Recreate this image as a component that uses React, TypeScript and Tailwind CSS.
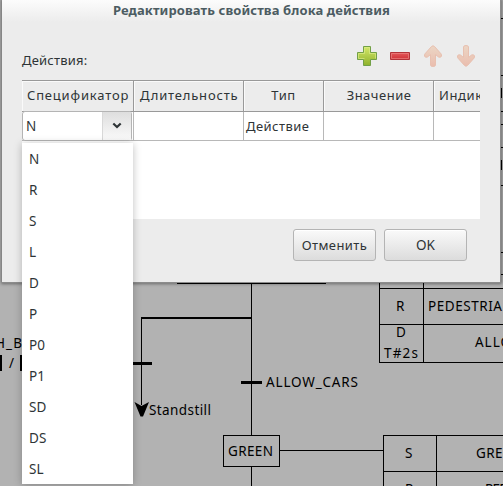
import React from "react";

const OPTIONS = ["N", "R", "S", "L", "D", "P", "P0", "P1", "SD", "DS", "SL"];

type LabelProps = { x: number; y: number; w: number; children: string };

function Label({ x, y, w, children }: LabelProps) {
  return (
    <text x={x} y={y} textLength={w} fontSize="13.5" fill="#000">
      {children}
    </text>
  );
}

function Diagram() {
  return (
    <svg className="absolute inset-0" width="503" height="486" viewBox="0 0 503 486">
      <g stroke="#000" strokeWidth="1" fill="none" shapeRendering="crispEdges">
        <path d="M177 283.500H326M251.500 283V435M251.500 466V486M141.500 317V405" />
        <path d="M141 318H252" strokeWidth="2" />
        <path d="M133 363.500H152M241 382.500H262" strokeWidth="3" />
        <path d="M223.500 435.500H279.500V466.500H223.500ZM280 450.500H383" />
        <path d="M379.500 280V362.500H503M423.500 280V362M379 288.500H503M379 324.500H503" />
        <path d="M503 435.500H383.500V486M436.500 435V486M383 471.500H503" />
        <path d="M500 18.500H503M500 75.500H503M500 111.500H503M500 124.500H503M500 147.500H503M500 185.500H503M500 252.500H503M500 274.500H503" />
        <path d="M501.500 88V98M501.500 160V170" />
      </g>
      <path d="M0 355H2V371H0ZM20 355H23V371H20Z" />
      <path d="M134.500 402L141.500 406L149 402L143 416.500H140.500Z" />
      <Label x={-5} y={348} w={27}>H_B</Label>
      <Label x={9} y={368} w={5}>/</Label>
      <Label x={149} y={415} w={62}>Standstill</Label>
      <Label x={266} y={387} w={92}>ALLOW_CARS</Label>
      <Label x={228} y={456} w={45}>GREEN</Label>
      <Label x={396} y={311} w={8}>R</Label>
      <Label x={428} y={311} w={74}>PEDESTRIA</Label>
      <Label x={396} y={337} w={10}>D</Label>
      <Label x={384} y={358} w={34}>T#2s</Label>
      <Label x={475} y={347} w={36}>ALLO</Label>
      <Label x={405} y={458} w={8}>S</Label>
      <Label x={476} y={458} w={45}>GREEN</Label>
      <Label x={405} y={494} w={8}>R</Label>
      <Label x={485} y={494} w={24}>RED</Label>
    </svg>
  );
}

function Toolbar() {
  return (
    <svg width="122" height="24" viewBox="355 44 122 24">
      <defs>
        <linearGradient id="plus" x1="0" y1="0" x2="0" y2="1">
          <stop offset="0" stopColor="#d4e86a" />
          <stop offset="1" stopColor="#8fb12c" />
        </linearGradient>
        <linearGradient id="minus" x1="0" y1="0" x2="0" y2="1">
          <stop offset="0" stopColor="#e45a5c" />
          <stop offset="1" stopColor="#cf3035" />
        </linearGradient>
        <linearGradient id="arrow" x1="0" y1="0" x2="0" y2="1">
          <stop offset="0" stopColor="#ecd6c5" />
          <stop offset="1" stopColor="#eabdae" />
        </linearGradient>
      </defs>
      <path d="M363.500 46.500H370.500V52.500H376.500V59.500H370.500V65.500H363.500V59.500H357.500V52.500H363.500Z" fill="url(#plus)" stroke="#72a047" strokeLinejoin="round" />
      <path d="M364.500 58.500H358.500V53.500H364.500V47.500H369.500V53.500H375.500V58.500" fill="none" stroke="#dcec8c" strokeOpacity=".65" />
      <path d="M390.500 52.500H409.500V59.500H390.500Z" fill="url(#minus)" stroke="#b23338" />
      <path d="M391.500 53.500H408.500V58.500H391.500Z" fill="none" stroke="#ed8784" strokeOpacity=".65" />
      <path d="M430.500 54.500L427.500 57Q425 58 424.500 56Q424.300 54.500 425 53.800L431.500 46.500Q433 45 434.500 46.500L441 53.800Q441.700 54.500 441.500 56Q441 58 438.500 57L435.500 54.500V65Q435.500 66.500 433 66.500Q430.500 66.500 430.500 65Z" fill="url(#arrow)" stroke="#e8c0b0" />
      <path d="M463.500 57.500L460.500 55Q458 54 457.500 56Q457.300 57.500 458 58.200L464.500 65.500Q466 67 467.500 65.500L474 58.200Q474.700 57.500 474.500 56Q474 54 471.500 55L468.500 57.500V47Q468.500 45.500 466 45.500Q463.500 45.500 463.500 47Z" fill="url(#arrow)" stroke="#e8c0b0" />
    </svg>
  );
}

const HEAD = "shrink-0 border-r border-[#999] h-full flex items-center shadow-[inset_1px_1px_0_#fafafa]";
const CELL = "shrink-0 border-r border-[#b8b8b8] h-full flex items-center";

function Dialog() {
  return (
    <div className="absolute top-0 left-[2px] flex h-[283px] w-[499px] flex-col border-r border-b border-[#8c8c8c] bg-[#ececec] shadow-[0_0_3px_1px_rgba(0,0,0,0.4)]">
      <div className="h-[22px] shrink-0 bg-linear-to-b from-[#fcfcfc] to-[#ececec] pl-px text-center text-[13px] leading-[21px] font-bold whitespace-nowrap text-[#4c5c62]">
        <span className="tracking-[0.1px]">Редактировать свойства блока действия</span>
      </div>
      <div className="flex h-[58px] shrink-0 pl-5">
        <div className="w-[333px] pt-[29px] text-[13px] leading-[18px] tracking-[0.2px]">Действия:</div>
        <div className="pt-[22px]">
          <Toolbar />
        </div>
      </div>
      <div className="ml-5 flex h-[139px] w-[458px] shrink-0 flex-col overflow-hidden bg-white text-[13px] whitespace-nowrap">
        <div className="flex h-8 shrink-0 border-y border-[#999] bg-[#ececec]">
          <div className={HEAD + " w-[112px] pl-[5px] tracking-[0.82px]"}>Спецификатор</div>
          <div className={HEAD + " w-[110px] pl-[6px] tracking-[0.82px]"}>Длительность</div>
          <div className={HEAD + " w-[80px] justify-center tracking-[0.6px]"}>Тип</div>
          <div className={HEAD + " w-[110px] justify-center pl-px tracking-[0.5px]"}>Значение</div>
          <div className={HEAD + " w-[100px] pl-[5px] tracking-[0.6px]"}>Индикатор</div>
        </div>
        <div className="flex h-[29px] shrink-0 border-b border-[#b8b8b8]">
          <div className={CELL + " w-[112px]"}>
            <div className="flex h-[30px] w-[110px] shrink-0 rounded-[3px] border border-[#b4b4b4] bg-white">
              <div className="w-[79px] pl-[3px] text-[13.5px] leading-[29px]">N</div>
              <div className="flex flex-1 items-center justify-center border-l border-[#d8d8d8] bg-linear-to-b from-[#dedede] to-[#fafafa] pr-px">
                <svg width="10" height="7" viewBox="0 0 10 7" className="mb-px">
                  <path d="M1.300 1.500L5 5L8.700 1.500" fill="none" stroke="#2e3436" strokeWidth="2.200" />
                </svg>
              </div>
            </div>
          </div>
          <div className={CELL + " w-[110px]"} />
          <div className={CELL + " w-[80px] pt-px pl-[2px] tracking-[0.45px]"}>Действие</div>
          <div className={CELL + " w-[110px]"} />
          <div className={CELL + " w-[100px]"} />
        </div>
      </div>
      <div className="flex justify-end gap-2 pt-[10px] pr-[33px] text-[13.5px]">
        <button className="h-8 w-[83px] rounded-[3px] border border-[#b4b4b4] bg-linear-to-b from-[#fafafa] to-[#dcdcdc] pt-px shadow-[inset_0_1px_0_#fff]"><span className="text-[13px] tracking-[0.4px]">Отменить</span></button>
        <button className="h-8 w-[83px] rounded-[3px] border border-[#b4b4b4] bg-linear-to-b from-[#fafafa] to-[#dcdcdc] pt-px shadow-[inset_0_1px_0_#fff]">OK</button>
      </div>
    </div>
  );
}

function Dropdown() {
  return (
    <div className="absolute top-[143px] left-[22px] flex h-[341px] w-[111px] flex-col bg-white pt-px shadow-[0_1px_8px_rgba(0,0,0,0.25)]">
      {OPTIONS.map((option) => (
        <div key={option} className="flex h-[31px] shrink-0 items-center pl-[7px] text-[13.5px] tracking-[0.2px]">
          {option}
        </div>
      ))}
    </div>
  );
}

export default function App() {
  return (
    <main className="relative h-[486px] w-[503px] overflow-hidden bg-[#b2b2b2] font-['Noto_Sans','Open_Sans',sans-serif] text-[#2e3436]">
      <Diagram />
      <Dialog />
      <Dropdown />
    </main>
  );
}
